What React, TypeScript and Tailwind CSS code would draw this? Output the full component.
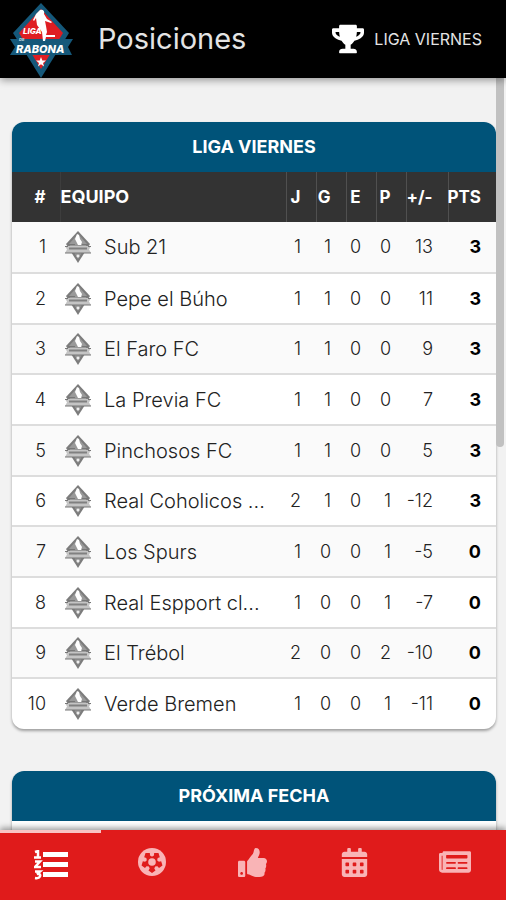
import React from 'react';
import { FaTrophy, FaThumbsUp, FaCalendarAlt, FaNewspaper } from 'react-icons/fa';

type Team = { name: string; stats: [number, number, number, number, number]; pts: number };

const teams: Team[] = [
  { name: 'Sub 21', stats: [1, 1, 0, 0, 13], pts: 3 },
  { name: 'Pepe el Búho', stats: [1, 1, 0, 0, 11], pts: 3 },
  { name: 'El Faro FC', stats: [1, 1, 0, 0, 9], pts: 3 },
  { name: 'La Previa FC', stats: [1, 1, 0, 0, 7], pts: 3 },
  { name: 'Pinchosos FC', stats: [1, 1, 0, 0, 5], pts: 3 },
  { name: 'Real Coholicos ...', stats: [2, 1, 0, 1, -12], pts: 3 },
  { name: 'Los Spurs', stats: [1, 0, 0, 1, -5], pts: 0 },
  { name: 'Real Espport cl...', stats: [1, 0, 0, 1, -7], pts: 0 },
  { name: 'El Trébol', stats: [2, 0, 0, 2, -10], pts: 0 },
  { name: 'Verde Bremen', stats: [1, 0, 0, 1, -11], pts: 0 },
];

function LeagueLogo() {
  return (
    <svg viewBox="0 0 64 76" className="mt-0.5 h-[76px] w-16 shrink-0" role="img" aria-label="Liga de Rabona">
      <path d="M31 1 59 31 31 76 3 31Z" fill="#15587a" />
      <path d="M31 7 53 31 31 67 9 31Z" fill="#df1d22" />
      <path d="M0 37H63L58 45 62 53H0L5 45Z" fill="#15587a" />
      <path d="M30 8c3-1 5 1 4 4l3 5 5 3-1 1-6-2 1 5 1 6-1 3 5 0h4v2h-9l-1 4h-2l-1-9-5-7-1-7-2 3-1-1 3-6Z" fill="#fff" />
      <text x="13" y="32" fontSize="8" fontStyle="italic" fontWeight="800" fill="#fff" fontFamily="Inter, sans-serif">LIGA</text>
      <text x="9" y="39" fontSize="4" fontStyle="italic" fontWeight="700" fill="#cfe1ec" fontFamily="Inter, sans-serif">DE</text>
      <text x="6" y="51" fontSize="11" fontStyle="italic" fontWeight="800" fill="#fff" fontFamily="Inter, sans-serif">RABONA</text>
      <path d="m31 55 1.300 3.600H36l-3 2.300 1.100 3.600L31 62.300l-3.100 2.200L29 60.900l-3-2.300h3.700Z" fill="#fff" />
    </svg>
  );
}

function Shield() {
  return (
    <svg viewBox="0 0 28 32" className="h-8 w-7 shrink-0" aria-hidden="true">
      <path d="M14 0 26 13 14 32 2 13Z" fill="#7c7c7c" />
      <path d="M14 3 23 13 14 28 5 13Z" fill="#9a9a9a" />
      <path d="M13 3 15 4 16 8 18 11 17 14H14L12 10 11 8Z" fill="#fff" />
      <path d="M1 15H27L25 18.500 27 22H1L3 18.500Z" fill="#c4c4c4" />
      <path d="M4 13.500H11M18 13.500H24M1 15.500H4M24 15.500H27M1 22H27" stroke="#777" strokeWidth="1" />
      <path d="M5 17.500H23" stroke="#808080" strokeWidth="2" />
      <circle cx="14" cy="25" r="1.500" fill="#eee" />
    </svg>
  );
}

function RankingIcon() {
  return (
    <svg viewBox="0 0 34 30" className="h-[30px] w-[34px]" fill="#fff" aria-hidden="true">
      <g stroke="#fff" strokeWidth="2.500" fill="none">
        <path d="M1 2 4 1V7M0 7.500H7" />
        <path d="M1 11.500H6L1 17H7" />
        <path d="M1 21.500H6L3 24C8 23 7 29 1 28" />
      </g>
      <path d="M9 2H34V7H9ZM9 12H34V17H9ZM9 22H34V27H9Z" />
    </svg>
  );
}

function BallIcon() {
  const spokes = [0, 72, 144, 216, 288];
  return (
    <svg viewBox="0 0 28 28" className="size-7" aria-hidden="true">
      <circle cx="14" cy="14" r="14" fill="currentColor" />
      <g fill="#e01b1b">
        {spokes.map((a) => (
          <path key={a} d="M10 16.500 18 16.500 16.300 20.500 17.500 22.500 14 25 10.500 22.500 11.700 20.500Z" transform={`rotate(${a} 14 14)`} />
        ))}
      </g>
      <circle cx="14" cy="14" r="3.800" fill="currentColor" />
    </svg>
  );
}

const tabs = [
  { label: 'Posiciones', icon: <RankingIcon /> },
  { label: 'Partidos', icon: <BallIcon /> },
  { label: 'Favoritos', icon: <FaThumbsUp size={29} /> },
  { label: 'Calendario', icon: <FaCalendarAlt size={29} /> },
  { label: 'Noticias', icon: <FaNewspaper size={32} /> },
];

function CardTitle({ children }: { children: React.ReactNode }) {
  return (
    <h2 className="flex h-[50px] items-center justify-center bg-[#005379] text-lg font-bold text-white">
      {children}
    </h2>
  );
}

export default function App() {
  return (
    <div className="flex h-screen flex-col overflow-hidden bg-[#f2f2f2] font-['Inter',sans-serif] text-[#222]">
      <header className="z-10 flex h-[78px] shrink-0 items-center bg-black pr-6 pl-2.5 text-[#e4e4e4] shadow-[0_2px_8px_rgba(0,0,0,0.4)]">
        <LeagueLogo />
        <h1 className="ml-6 flex-1 text-[29px]">Posiciones</h1>
        <button className="flex items-center gap-2.5">
          <FaTrophy size={32} className="text-white" />
          <span className="text-base">LIGA VIERNES</span>
        </button>
      </header>

      <main className="relative min-h-0 flex-1 overflow-hidden pt-11 pr-2.5 pl-3">
        <div className="absolute top-0 right-0.5 h-[369px] w-2 rounded-b bg-[#c1c1c1]" />
        <section className="overflow-hidden rounded-xl bg-white shadow-[0_2px_3px_rgba(0,0,0,0.35)]">
          <CardTitle>LIGA VIERNES</CardTitle>
          <table className="w-full table-fixed text-right text-lg font-light">
            <colgroup>
              <col className="w-12" />
              <col />
              <col className="w-[30px]" />
              <col className="w-[30px]" />
              <col className="w-[30px]" />
              <col className="w-[30px]" />
              <col className="w-[42px]" />
              <col className="w-12" />
            </colgroup>
            <thead className="bg-[#333] text-[17px] text-white">
              <tr className="h-[50px]">
                <th className="pr-3.5">#</th>
                <th className="border-l border-[#3d3d3d] text-left text-lg">EQUIPO</th>
                {['J', 'G', 'E', 'P', '+/-', 'PTS'].map((h) => (
                  <th key={h} className="border-l border-[#505050] pr-[15px]">
                    <div className="flex justify-end">{h}</div>
                  </th>
                ))}
              </tr>
            </thead>
            <tbody>
              {teams.map((t, i) => (
                <tr key={t.name} className="h-[51px] border-b-2 border-[#ddd] last:border-b-0 odd:bg-[#fafafa] nth-[3n]:h-[50px]">
                  <td className="pr-3.5">{i + 1}</td>
                  <td>
                    <div className="flex items-center gap-3 pl-1 text-left text-xl whitespace-nowrap">
                      <Shield />
                      {t.name}
                    </div>
                  </td>
                  {t.stats.map((s, k) => (
                    <td key={k} className="pr-[15px]">
                      <div className="flex justify-end whitespace-nowrap">{s}</div>
                    </td>
                  ))}
                  <td className="pr-[15px] font-bold text-black">{t.pts}</td>
                </tr>
              ))}
            </tbody>
          </table>
        </section>

        <section className="mt-[42px] h-40 overflow-hidden rounded-xl bg-white shadow-[0_2px_3px_rgba(0,0,0,0.35)]">
          <CardTitle>PRÓXIMA FECHA</CardTitle>
        </section>
      </main>

      <nav className="z-10 grid h-[70px] shrink-0 grid-cols-5 bg-[#e01b1b] shadow-[0_-2px_6px_rgba(0,0,0,0.4)]">
        {tabs.map((t, i) => (
          <button
            key={t.label}
            aria-label={t.label}
            className={
              i === 0
                ? 'flex items-center justify-center border-t-[3px] border-[#f9c4c4] pb-1 text-white'
                : 'flex items-center justify-center pb-1.5 text-[#f9b4b6]'
            }
          >
            {t.icon}
          </button>
        ))}
      </nav>
    </div>
  );
}
